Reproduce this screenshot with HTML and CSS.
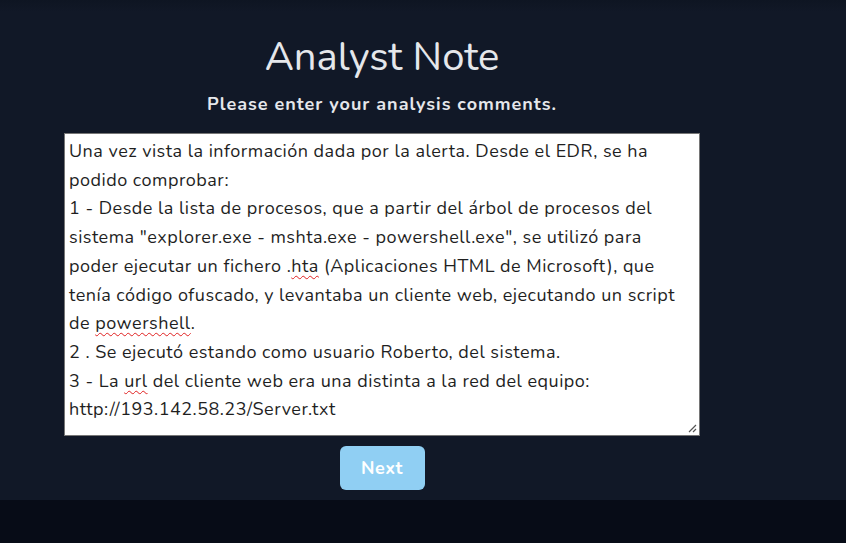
FILE: index.html
```html
<!DOCTYPE html>
<html lang="es">
<head>
<meta charset="utf-8">
<title>Analyst Note</title>
<link rel="stylesheet" href="styles.css">
</head>
<body>
<main class="page">
  <section class="panel">
    <h1 class="title">Analyst Note</h1>
    <p class="subtitle">Please enter your analysis comments.</p>
    <div class="note" role="textbox" aria-multiline="true">
      <div class="line">Una vez vista la información dada por la alerta. Desde el EDR, se ha</div>
      <div class="line">podido comprobar:</div>
      <div class="line">1 - Desde la lista de procesos, que a partir del árbol de procesos del</div>
      <div class="line">sistema "explorer.exe - mshta.exe - powershell.exe", se utilizó para</div>
      <div class="line">poder ejecutar un fichero .<span class="typo">hta</span> (Aplicaciones HTML de Microsoft), que</div>
      <div class="line">tenía código ofuscado, y levantaba un cliente web, ejecutando un script</div>
      <div class="line">de <span class="typo">powershell</span>.</div>
      <div class="line">2 . Se ejecutó estando como usuario Roberto, del sistema.</div>
      <div class="line">3 - La <span class="typo">url</span> del cliente web era una distinta a la red del equipo:</div>
      <div class="line">http://193.142.58.23/Server.txt</div>
      <svg class="grip" width="10" height="10" viewBox="0 0 10 10"><path d="M9 2 L2 9 M9 6 L6 9" stroke="#555" stroke-width="1.2" fill="none"/></svg>
    </div>
    <button class="next" type="button">Next</button>
  </section>
</main>
<footer class="bottom"></footer>
</body>
</html>
```
FILE: styles.css
```css
html, body {
  margin: 0;
  padding: 0;
}
body {
  background: #070c17;
  font-family: "Nunito", "Lato", "Noto Sans", sans-serif;
  height: 543px;
  overflow: hidden;
}
.page {
  height: 500px;
  background: linear-gradient(#0e1522 0px, #111827 12px, #111827 100%);
  box-sizing: border-box;
  padding-top: 31px;
}
.panel {
  width: 636px;
  margin-left: 64px;
  display: flex;
  flex-direction: column;
  align-items: center;
}
.title {
  margin: 0;
  font-size: 40px;
  font-weight: 400;
  line-height: 52px;
  color: #e5e7eb;
}
.subtitle {
  margin: 9px 0 0;
  font-size: 18px;
  font-weight: 700;
  line-height: 24px;
  letter-spacing: 1px;
  color: #e5e7eb;
}
.note {
  position: relative;
  align-self: stretch;
  margin-top: 17px;
  height: 303px;
  box-sizing: border-box;
  background: #ffffff;
  border: 1px solid #767676;
  padding: 3px 4px;
  color: #1f1f1f;
  font-size: 18px;
  line-height: 28.7px;
  letter-spacing: 0.5px;
}
.line {
  white-space: nowrap;
}
.typo {
  text-decoration: underline wavy #e02020;
  text-decoration-thickness: 1px;
  text-underline-offset: 3px;
}
.grip {
  position: absolute;
  right: 2px;
  bottom: 2px;
}
.next {
  margin-top: 10px;
  width: 85px;
  height: 44px;
  border: none;
  border-radius: 6px;
  background: #90cff3;
  color: #ffffff;
  font-family: inherit;
  font-size: 18px;
  font-weight: 700;
  letter-spacing: 0.5px;
}
.bottom {
  height: 43px;
}
```
